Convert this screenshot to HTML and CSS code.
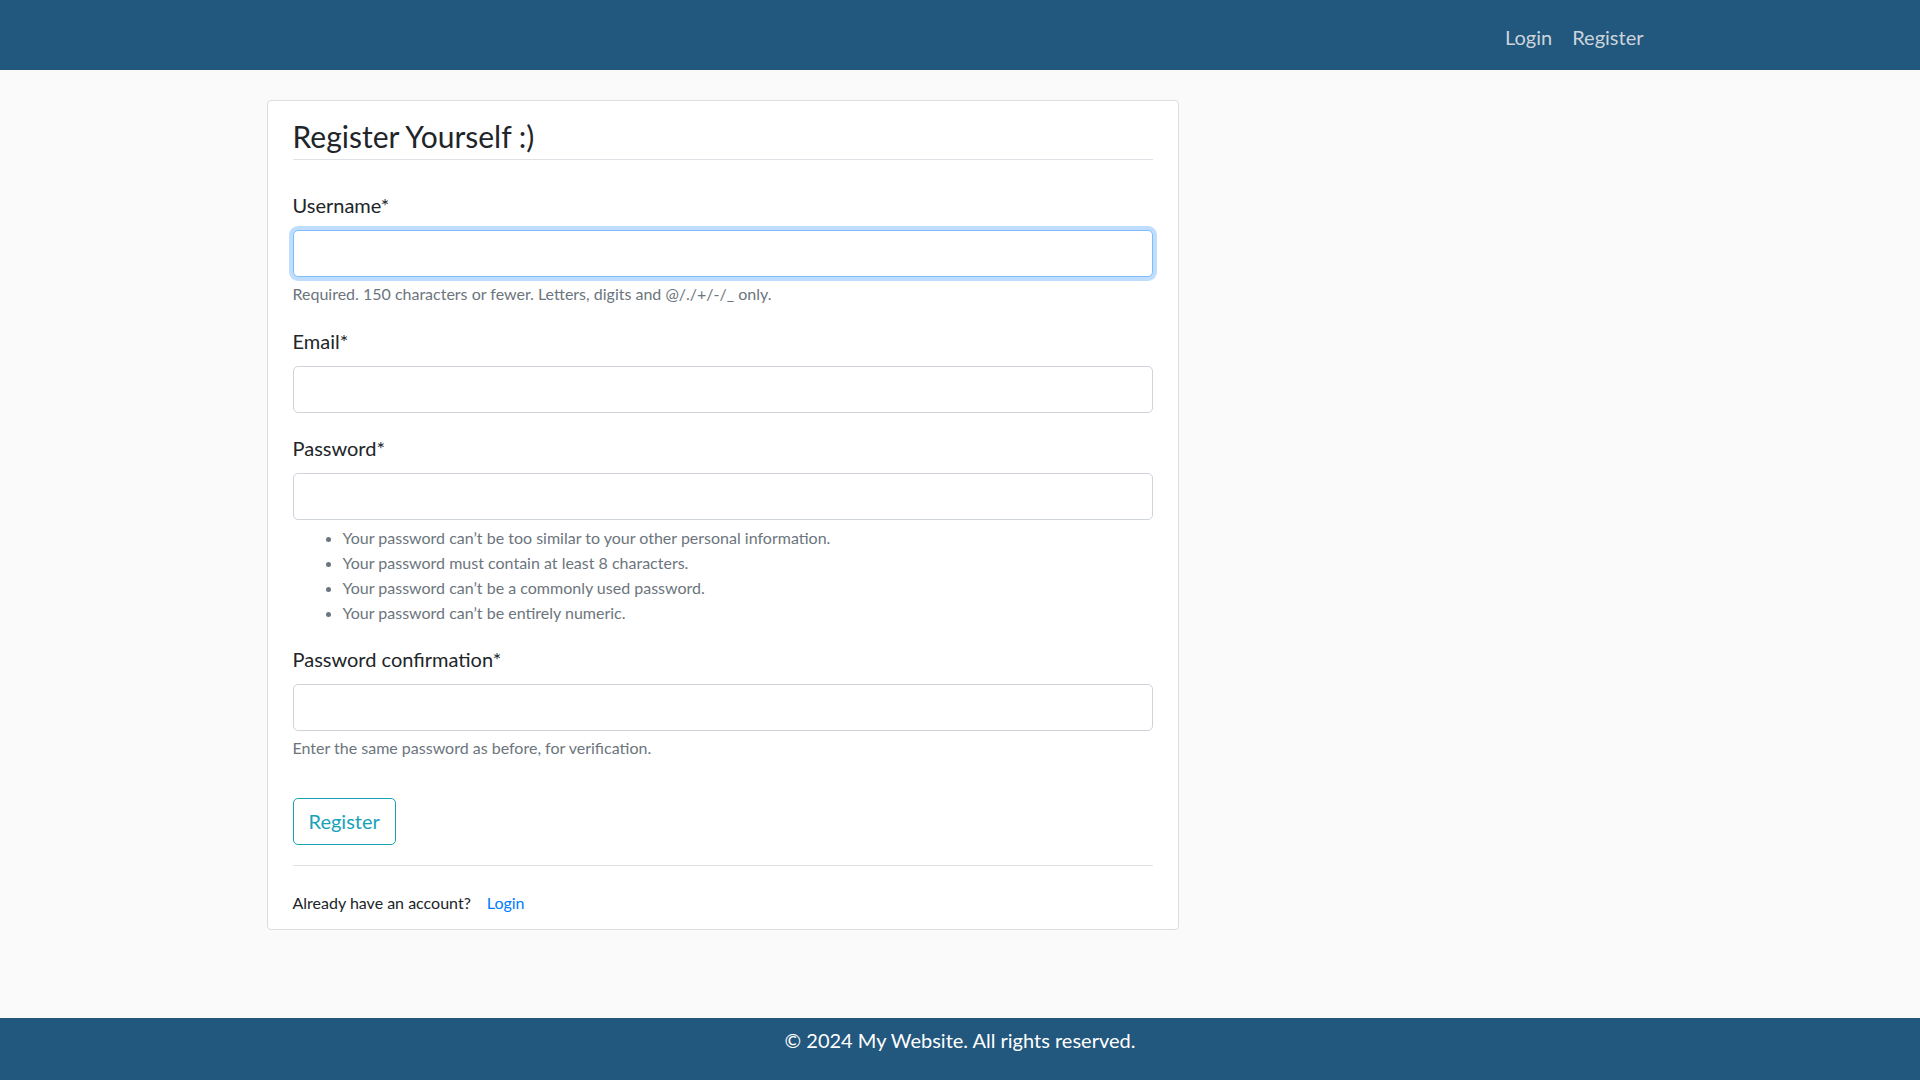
FILE: index.html
```html
<!DOCTYPE html>
<html lang="en">
<head>
<meta charset="utf-8">
<title>Register</title>
<link rel="stylesheet" href="styles.css">
</head>
<body>
<header class="site-header">
  <nav class="navbar">
    <div class="nav-container">
      <div class="nav-links">
        <a class="nav-link" href="#">Login</a>
        <a class="nav-link" href="#">Register</a>
      </div>
    </div>
  </nav>
</header>
<main class="main">
  <div class="content-section">
    <form>
      <fieldset class="fieldset">
        <legend class="legend">Register Yourself :)</legend>
        <div class="form-group">
          <label class="label">Username*</label>
          <input class="form-control focused" type="text">
          <small class="form-text">Required. 150 characters or fewer. Letters, digits and @/./+/-/_ only.</small>
        </div>
        <div class="form-group">
          <label class="label">Email*</label>
          <input class="form-control" type="email">
        </div>
        <div class="form-group group-pw">
          <label class="label">Password*</label>
          <input class="form-control" type="password">
          <small class="form-text">
            <ul class="pw-list">
              <li>Your password can’t be too similar to your other personal information.</li>
              <li>Your password must contain at least 8 characters.</li>
              <li>Your password can’t be a commonly used password.</li>
              <li>Your password can’t be entirely numeric.</li>
            </ul>
          </small>
        </div>
        <div class="form-group">
          <label class="label">Password confirmation*</label>
          <input class="form-control" type="password">
          <small class="form-text">Enter the same password as before, for verification.</small>
        </div>
      </fieldset>
      <div class="btn-group">
        <button class="btn-outline" type="button">Register</button>
      </div>
    </form>
    <div class="account-row">
      <span class="account-text">Already have an account?</span><a class="account-link" href="#">Login</a>
    </div>
  </div>
</main>
<footer class="site-footer">© 2024 My Website. All rights reserved.</footer>
</body>
</html>
```
FILE: styles.css
```css
* { box-sizing: border-box; }
html, body { margin: 0; padding: 0; }
body {
  background: #fafafa;
  color: #212529;
  font-family: Lato, "Open Sans", "Liberation Sans", sans-serif;
  font-size: 20px;
  line-height: 30px;
  min-height: 100vh;
  display: flex;
  flex-direction: column;
}
.navbar {
  background: #22577e;
  height: 70px;
  display: flex;
  align-items: center;
}
.nav-container {
  width: 1425px;
  margin: 0 auto;
  padding: 0 19px;
}
.nav-links {
  display: flex;
  justify-content: flex-end;
  padding-top: 3px;
}
.nav-link {
  color: #cbd5db;
  text-decoration: none;
  padding: 0 10px;
  font-size: 20px;
  line-height: 30px;
}
.main {
  width: 1425px;
  margin: 0 auto;
  padding: 30px 19px 0;
}
.content-section {
  width: 912px;
  background: #fff;
  border: 1px solid #dddddd;
  border-radius: 4px;
  padding: 12.5px 25px 14px;
}
.fieldset { border: 0; margin: 0; padding: 0; min-width: 0; }
.legend {
  display: block;
  width: 100%;
  padding: 0;
  font-size: 30px;
  line-height: 45px;
  font-weight: 400;
  border-bottom: 1px solid #dee2e6;
  margin-bottom: 30px;
}
.form-group { margin-bottom: 20px; }
.group-pw { margin-bottom: 19px; }
.label {
  display: block;
  font-size: 20px;
  line-height: 30px;
  margin-bottom: 10px;
}
.form-control {
  display: block;
  width: 100%;
  height: 47px;
  border: 1px solid #ced4da;
  border-radius: 5px;
  background: #fff;
  padding: 7.5px 15px;
  font: inherit;
  outline: none;
}
.focused {
  border-color: #80bdff;
  box-shadow: 0 0 0 4px rgba(0, 123, 255, 0.25);
}
.form-text {
  display: block;
  margin-top: 5px;
  font-size: 16px;
  line-height: 24px;
  color: #6c757d;
}
.pw-list {
  margin: 0;
  padding-left: 50px;
}
.pw-list li { line-height: 25px; }
.btn-group { margin-top: 18px; margin-bottom: 20px; }
.btn-outline {
  font: inherit;
  font-size: 20px;
  line-height: 30px;
  color: #17a2b8;
  background: transparent;
  border: 1px solid #17a2b8;
  border-radius: 5px;
  padding: 7.5px 15px;
}
.account-row {
  border-top: 1px solid #dee2e6;
  padding-top: 25px;
  font-size: 16px;
  line-height: 24px;
}
.account-link {
  margin-left: 16px;
  color: #007bff;
  text-decoration: none;
}
.site-footer {
  margin-top: auto;
  height: 62px;
  background: #22577e;
  color: #fff;
  text-align: center;
  font-size: 20px;
  line-height: 30px;
  padding-top: 7px;
}
```
